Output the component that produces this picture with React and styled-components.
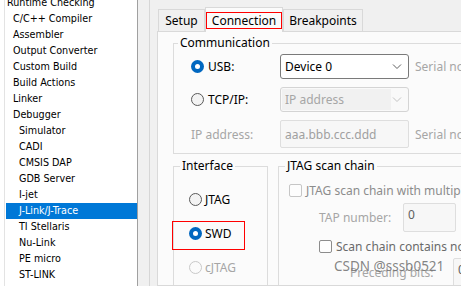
import React from 'react';
import styled, { createGlobalStyle, css } from 'styled-components';

const GlobalStyle = createGlobalStyle`
  html, body {
    margin: 0;
    padding: 0;
    background: #f0f0f0;
    overflow: hidden;
  }
  body {
    font-family: "Noto Sans", "Open Sans", sans-serif;
    font-size: 12px;
    color: #000;
  }
`;

const Window = styled.div`
  position: relative;
  width: 461px;
  height: 286px;
  display: flex;
  overflow: hidden;
  background: #f0f0f0;
`;

/* ---------- category tree ---------- */

const Sidebar = styled.div`
  width: 138px;
  flex-shrink: 0;
  box-sizing: border-box;
  padding-left: 4px;
  background: #fff;
  border-right: 1px solid #a0a0a0;
  overflow: hidden;
`;

const Tree = styled.ul`
  list-style: none;
  margin: -5px 0 0;
  padding: 0 0 0 1px;
  height: calc(100% + 5px);
  border-left: 1px solid #e3e3e3;
`;

const TreeItem = styled.li`
  height: 16px;
  line-height: 16px;
  font-family: "DejaVu Sans Condensed", "Noto Sans", sans-serif;
  font-size: 10.7px;
  white-space: nowrap;
  padding-left: ${p => 1 + p.$level * 6}px;
  color: ${p => (p.$selected ? '#fff' : '#000')};
  background: ${p => (p.$selected ? '#0078d7' : 'transparent')};
`;

const Divider = styled.div`
  width: 12px;
  flex-shrink: 0;
  box-sizing: border-box;
  border-right: 1px solid #d6d6d6;
`;

/* ---------- tabs ---------- */

const Main = styled.div`
  flex: 1;
  min-width: 0;
  display: flex;
  flex-direction: column;
  padding: 7px 0 0 7px;
`;

const TabBar = styled.div`
  display: flex;
  align-items: flex-end;
  height: 24px;
  padding-left: 1px;
`;

const Tab = styled.div`
  box-sizing: border-box;
  width: ${p => p.$w}px;
  height: ${p => (p.$active ? 25 : 22)}px;
  display: flex;
  align-items: center;
  justify-content: center;
  border: 1px solid #d9d9d9;
  border-bottom: none;
  background: ${p => (p.$active ? '#fbfbfb' : '#f0f0f0')};
  white-space: nowrap;
  ${p =>
    p.$active &&
    css`
      position: relative;
      z-index: 1;
      margin-bottom: -1px;
      padding-top: 1px;
    `}
`;

const TabLabel = styled.span`
  box-sizing: border-box;
  height: 17px;
  display: flex;
  align-items: center;
  justify-content: center;
  ${p =>
    p.$marked &&
    css`
      width: 76px;
      border: 1px solid #ff0000;
    `}
`;

const Panel = styled.div`
  flex: 1;
  display: flex;
  flex-direction: column;
  background: #fbfbfb;
  border: 1px solid #d9d9d9;
  border-right: none;
  padding: 3px 0 0 15px;
  overflow: hidden;
`;

/* ---------- group boxes ---------- */

const GroupBox = styled.fieldset`
  margin: 0;
  flex-shrink: 0;
  box-sizing: border-box;
  width: ${p => p.$w}px;
  min-width: 0;
  border: 1px solid #dcdcdc;
  padding: ${p => p.$pad};
`;

const Legend = styled.legend`
  padding: 0 2px;
  margin-left: ${p => p.$inset}px;
  line-height: 16px;
  color: #000;
`;

const CommGrid = styled.div`
  display: grid;
  grid-template-columns: 83px 129px auto;
  grid-template-rows: 25px 25px 28px;
  column-gap: 6px;
  row-gap: 8px;
  margin-left: 17px;
`;

const Option = styled.label`
  display: flex;
  align-items: center;
  gap: 4px;
  white-space: nowrap;
  color: ${p => (p.$disabled ? '#a6a6a6' : '#000')};
`;

const Radio = styled.span`
  width: 13px;
  height: 13px;
  flex-shrink: 0;
  box-sizing: border-box;
  border-radius: 50%;
  display: flex;
  align-items: center;
  justify-content: center;
  ${p =>
    p.$checked
      ? css`
          background: #0067c0;
          &::after {
            content: '';
            width: 5px;
            height: 5px;
            border-radius: 50%;
            background: #fff;
          }
        `
      : css`
          border: 1px solid ${p.$disabled ? '#c9c9c9' : '#595959'};
          background: ${p.$disabled ? 'transparent' : '#f3f3f3'};
        `}
`;

const FieldLabel = styled.span`
  display: flex;
  align-items: center;
  color: #a6a6a6;
  white-space: nowrap;
`;

const Select = styled.div`
  box-sizing: border-box;
  display: flex;
  align-items: center;
  justify-content: space-between;
  padding: 0 6px 0 4px;
  background: #fff;
  border: 1px solid #7a7a7a;
  border-radius: 3px;
  color: #000;
`;

const DisabledCombo = styled(Select)`
  padding: 1px 6px 1px 1px;
  align-items: stretch;
  background: #f9f9f9;
  border-color: #d4d4d4;
  color: #a6a6a6;
`;

const ComboText = styled.span`
  width: 106px;
  display: flex;
  align-items: center;
  padding-left: 3px;
  background: #f1f1f1;
`;

const Chevron = styled.svg`
  align-self: center;
  width: 10px;
  height: 6px;
  fill: none;
  stroke: ${p => p.$color};
  stroke-width: 1;
`;

const TextBox = styled.div`
  box-sizing: border-box;
  display: flex;
  align-items: ${p => (p.$top ? 'flex-start' : 'center')};
  padding: ${p => (p.$top ? '2px 0 0 4px' : '0 0 0 4px')};
  background: #f7f7f7;
  border: 1px solid #dedede;
  border-radius: 2px;
  color: ${p => p.$color || '#a0a0a0'};
  width: ${p => (p.$w ? `${p.$w}px` : 'auto')};
  height: ${p => (p.$h ? `${p.$h}px` : 'auto')};
  flex-shrink: 0;
`;

const Hint = styled.span`
  display: flex;
  align-items: center;
  color: #a6a6a6;
  white-space: nowrap;
`;

const BottomRow = styled.div`
  display: flex;
  align-items: flex-start;
  gap: 10px;
  margin-top: 4px;
`;

const OptionList = styled.div`
  display: flex;
  flex-direction: column;
  gap: 5px;
  margin-left: -2px;
`;

const InterfaceOption = styled(Option)`
  box-sizing: border-box;
  width: 73px;
  height: 29px;
  gap: 3px;
  padding: 0 0 4px 16px;
  border: 1px solid ${p => (p.$marked ? '#ff0000' : 'transparent')};
`;

const CheckRow = styled.label`
  display: flex;
  align-items: center;
  gap: 4px;
  height: 16px;
  margin: ${p => p.$m};
  white-space: nowrap;
  color: ${p => p.$color};
`;

const Checkbox = styled.span`
  width: 13px;
  height: 13px;
  flex-shrink: 0;
  box-sizing: border-box;
  border: 1px solid ${p => p.$border};
  border-radius: 2px;
  background: #fdfdfd;
`;

const FieldRow = styled.div`
  display: flex;
  align-items: center;
  margin: ${p => p.$m};
`;

const RowLabel = styled.span`
  width: ${p => p.$w}px;
  flex-shrink: 0;
  color: #a6a6a6;
  white-space: nowrap;
`;

const Watermark = styled.div`
  position: absolute;
  left: 334px;
  top: 257px;
  font-size: 13.5px;
  line-height: 18px;
  color: rgba(110, 110, 110, 0.85);
  white-space: nowrap;
  pointer-events: none;
`;

const categories = [
  ['Runtime Checking', 0],
  ['C/C++ Compiler', 1],
  ['Assembler', 1],
  ['Output Converter', 1],
  ['Custom Build', 1],
  ['Build Actions', 1],
  ['Linker', 1],
  ['Debugger', 1],
  ['Simulator', 2],
  ['CADI', 2],
  ['CMSIS DAP', 2],
  ['GDB Server', 2],
  ['I-jet', 2],
  ['J-Link/J-Trace', 2],
  ['TI Stellaris', 2],
  ['Nu-Link', 2],
  ['PE micro', 2],
  ['ST-LINK', 2],
];

const tabs = [
  { label: 'Setup', w: 47 },
  { label: 'Connection', w: 78, active: true },
  { label: 'Breakpoints', w: 80 },
];

const Arrow = ({ color }) => (
  <Chevron $color={color} viewBox="0 0 10 6">
    <polyline points="1,0.5 5,4.5 9,0.5" />
  </Chevron>
);

export default function App() {
  return (
    <Window>
      <GlobalStyle />
      <Sidebar>
        <Tree>
          {categories.map(([name, level]) => (
            <TreeItem key={name} $level={level} $selected={name === 'J-Link/J-Trace'}>
              {name}
            </TreeItem>
          ))}
        </Tree>
      </Sidebar>
      <Divider />
      <Main>
        <TabBar>
          {tabs.map(t => (
            <Tab key={t.label} $w={t.w} $active={t.active}>
              <TabLabel $marked={t.active}>{t.label}</TabLabel>
            </Tab>
          ))}
        </TabBar>
        <Panel>
          <GroupBox $w={330} $pad="3px 0 5px 0">
            <Legend $inset={4}>Communication</Legend>
            <CommGrid>
              <Option>
                <Radio $checked />
                USB:
              </Option>
              <Select>
                Device 0
                <Arrow color="#5f5f5f" />
              </Select>
              <Hint>Serial no</Hint>

              <Option>
                <Radio />
                TCP/IP:
              </Option>
              <DisabledCombo>
                <ComboText>IP address</ComboText>
                <Arrow color="#c2c2c2" />
              </DisabledCombo>
              <span />

              <FieldLabel>IP address:</FieldLabel>
              <TextBox>aaa.bbb.ccc.ddd</TextBox>
              <Hint>Serial no</Hint>
            </CommGrid>
          </GroupBox>

          <BottomRow>
            <GroupBox $w={95} $pad="13px 0 20px 0">
              <Legend $inset={6}>Interface</Legend>
              <OptionList>
                <InterfaceOption>
                  <Radio />
                  JTAG
                </InterfaceOption>
                <InterfaceOption $marked>
                  <Radio $checked />
                  SWD
                </InterfaceOption>
                <InterfaceOption $disabled>
                  <Radio $disabled />
                  cJTAG
                </InterfaceOption>
              </OptionList>
            </GroupBox>

            <GroupBox $w={260} $pad="8px 0 20px 0">
              <Legend $inset={6}>JTAG scan chain</Legend>
              <CheckRow $m="0 0 0 10px" $color="#8c8c8c">
                <Checkbox $border="#c6c6c6" />
                JTAG scan chain with multiple targets
              </CheckRow>
              <FieldRow $m="5px 0 0 40px">
                <RowLabel $w={84}>TAP number:</RowLabel>
                <TextBox $w={53} $h={29} $top $color="#606060">
                  0
                </TextBox>
              </FieldRow>
              <CheckRow $m="6px 0 0 40px" $color="#6a6a6a">
                <Checkbox $border="#8c8c8c" />
                Scan chain contains non-ARM devices
              </CheckRow>
              <FieldRow $m="4px 0 0 71px">
                <RowLabel $w={103}>Preceding bits:</RowLabel>
                <TextBox $w={53} $h={29} $top $color="#606060">
                  0
                </TextBox>
              </FieldRow>
            </GroupBox>
          </BottomRow>
        </Panel>
      </Main>
      <Watermark>CSDN @sssb0521</Watermark>
    </Window>
  );
}
